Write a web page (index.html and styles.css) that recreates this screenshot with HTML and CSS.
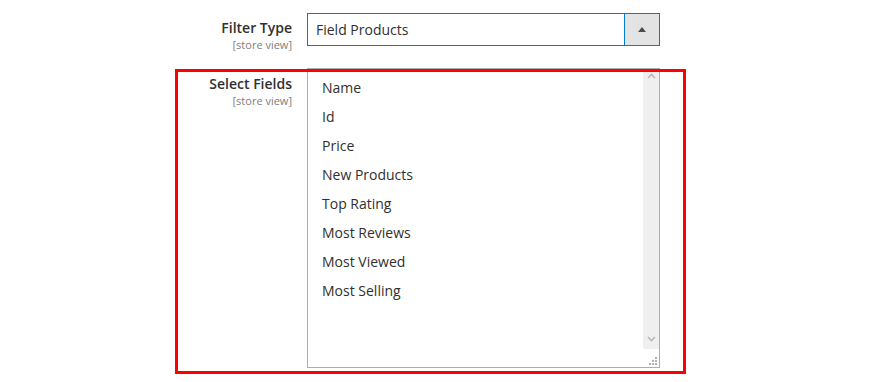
FILE: index.html
```html
<!DOCTYPE html>
<html lang="en">
<head>
	<meta charset="utf-8" />
	<title>Filter Settings</title>
	<link rel="stylesheet" href="styles.css">
</head>
<body>

<div class="form">
	<div class="field">
		<div class="label">
			<span class="name">Filter Type</span>
			<span class="scope">[store view]</span>
		</div>
		<div class="select">
			<div class="select-value">Field Products</div>
			<div class="select-button"><span class="arrow"></span></div>
		</div>
	</div>

	<div class="field field-multi">
		<div class="label">
			<span class="name">Select Fields</span>
			<span class="scope">[store view]</span>
		</div>
		<div class="multiselect">
			<ul class="options">
				<li>Name</li>
				<li>Id</li>
				<li>Price</li>
				<li>New Products</li>
				<li>Top Rating</li>
				<li>Most Reviews</li>
				<li>Most Viewed</li>
				<li>Most Selling</li>
			</ul>
			<div class="scrollbar">
				<div class="track">
					<svg width="9" height="6" viewBox="0 0 9 6"><path d="M1 5 L4.5 1.5 L8 5" fill="none" stroke="#b8b8b8" stroke-width="1.6"/></svg>
					<svg width="9" height="6" viewBox="0 0 9 6"><path d="M1 1 L4.5 4.5 L8 1" fill="none" stroke="#b8b8b8" stroke-width="1.6"/></svg>
				</div>
				<div class="grip">
					<svg width="8" height="8" viewBox="0 0 8 8" fill="#b0b0b0">
						<rect x="6" y="0" width="2" height="2"/>
						<rect x="3" y="3" width="2" height="2"/><rect x="6" y="3" width="2" height="2"/>
						<rect x="0" y="6" width="2" height="2"/><rect x="3" y="6" width="2" height="2"/><rect x="6" y="6" width="2" height="2"/>
					</svg>
				</div>
			</div>
		</div>
	</div>

	<div class="highlight"></div>
</div>

</body>
</html>
```

FILE: styles.css
```css
body {
	margin: 0;
	font-family: 'Open Sans', sans-serif;
	font-size: 14px;
	color: #303030;
	background: #fff;
}
.form {
	position: relative;
	width: 895px;
	height: 382px;
	padding-top: 13px;
	box-sizing: border-box;
}
.field {
	display: grid;
	grid-template-columns: 292px 353px;
	column-gap: 15px;
	align-items: start;
	height: 33px;
}
.field-multi {
	margin-top: 22px;
	height: 300px;
}
.label {
	display: flex;
	flex-direction: column;
	align-items: flex-end;
	padding-top: 7px;
}
.field-multi .label {
	padding-top: 8px;
}
.name {
	font-weight: 600;
	font-size: 14px;
	line-height: 16px;
	color: #303030;
}
.scope {
	margin-top: 2px;
	font-size: 11px;
	line-height: 13px;
	color: #808080;
}
.select {
	display: flex;
	height: 33px;
	border: 1px solid #007bdb;
	box-sizing: border-box;
}
.select-value {
	flex: 1;
	padding-left: 8px;
	line-height: 31px;
	font-size: 14px;
}
.select-button {
	width: 34px;
	background: #e3e3e3;
	border-left: 1px solid #007bdb;
	display: flex;
	align-items: center;
	justify-content: center;
}
.arrow {
	width: 0;
	height: 0;
	border-left: 4px solid transparent;
	border-right: 4px solid transparent;
	border-bottom: 5px solid #514943;
}
.multiselect {
	display: flex;
	height: 300px;
	border: 1px solid #adadad;
	box-sizing: border-box;
}
.options {
	flex: 1;
	list-style: none;
	margin: 0;
	padding: 4px 0 0 14px;
}
.options li {
	line-height: 29px;
	font-size: 14px;
}
.scrollbar {
	width: 16px;
	display: flex;
	flex-direction: column;
}
.track {
	flex: 1;
	background: #efefef;
	display: flex;
	flex-direction: column;
	justify-content: space-between;
	align-items: center;
	padding: 4px 0 7px;
}
.grip {
	height: 16px;
	display: flex;
	justify-content: flex-end;
	align-items: flex-end;
	padding: 0 2px 2px 0;
}
.highlight {
	position: absolute;
	left: 175px;
	top: 69px;
	width: 511px;
	height: 305px;
	border: 3px solid #ff0000;
	box-sizing: border-box;
}
```
